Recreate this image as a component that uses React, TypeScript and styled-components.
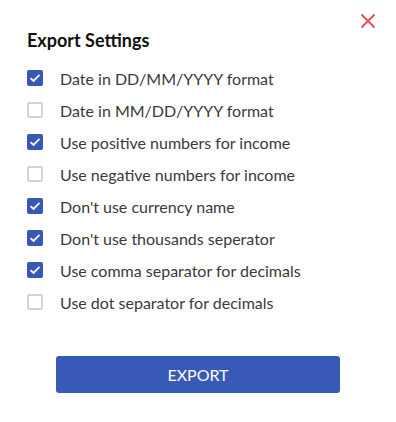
import React from "react";
import styled, { createGlobalStyle } from "styled-components";

const Global = createGlobalStyle`
  html, body { margin: 0; padding: 0; background: #fff; }
  body { font-family: Lato, "Open Sans", sans-serif; }
`;

const Dialog = styled.div`
  position: relative;
  width: 396px;
  height: 422px;
  box-sizing: border-box;
  padding: 28px 27px 0 27px;
  background: #fff;
`;

const Close = styled.button`
  position: absolute;
  top: 13px;
  right: 20px;
  width: 16px;
  height: 16px;
  padding: 0;
  border: 0;
  background: none;
  display: flex;
  align-items: center;
  justify-content: center;
  cursor: pointer;
`;

const Title = styled.h2`
  margin: 0 0 10px 0;
  font-size: 18px;
  font-weight: 700;
  color: #111;
  line-height: 24px;
`;

const List = styled.div`
  display: flex;
  flex-direction: column;
`;

const Row = styled.label`
  display: flex;
  align-items: center;
  gap: 17px;
  height: 32px;
  font-size: 16px;
  color: #3a3a3a;
`;

const Box = styled.span<{ $checked: boolean }>`
  width: 16px;
  height: 16px;
  flex: none;
  box-sizing: border-box;
  border-radius: 2px;
  display: flex;
  align-items: center;
  justify-content: center;
  background: ${(p) => (p.$checked ? "#3858b5" : "#fff")};
  border: ${(p) => (p.$checked ? "none" : "2px solid #d4d4d4")};
`;

const Footer = styled.div`
  display: flex;
  justify-content: center;
  margin-top: 38px;
`;

const ExportButton = styled.button`
  width: 284px;
  height: 37px;
  border: 0;
  border-radius: 3px;
  background: #3859b7;
  color: #fff;
  font-family: Lato, sans-serif;
  font-size: 16px;
  cursor: pointer;
`;

const items: [string, boolean][] = [
  ["Date in DD/MM/YYYY format", true],
  ["Date in MM/DD/YYYY format", false],
  ["Use positive numbers for income", true],
  ["Use negative numbers for income", false],
  ["Don't use currency name", true],
  ["Don't use thousands seperator", true],
  ["Use comma separator for decimals", true],
  ["Use dot separator for decimals", false],
];

export default function App() {
  return (
    <>
      <Global />
      <Dialog>
        <Close aria-label="close">
          <svg width="16" height="16" viewBox="0 0 16 16">
            <path d="M2 2 L14 14 M14 2 L2 14" stroke="#d9534f" strokeWidth="1.8" strokeLinecap="round" />
          </svg>
        </Close>
        <Title>Export Settings</Title>
        <List>
          {items.map(([label, checked]) => (
            <Row key={label}>
              <Box $checked={checked}>
                {checked && (
                  <svg width="12" height="10" viewBox="0 0 12 10">
                    <path d="M1.5 5.2 L4.5 8 L10.5 1.8" fill="none" stroke="#fff" strokeWidth="1.8" />
                  </svg>
                )}
              </Box>
              {label}
            </Row>
          ))}
        </List>
        <Footer>
          <ExportButton>EXPORT</ExportButton>
        </Footer>
      </Dialog>
    </>
  );
}
